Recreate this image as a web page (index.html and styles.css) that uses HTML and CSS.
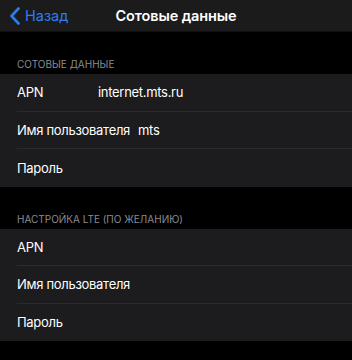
FILE: index.html
```html
<!DOCTYPE html>
<html lang="ru">
<head>
  <meta charset="UTF-8">
  <meta name="viewport" content="width=device-width, initial-scale=1.0">
  <title>Сотовые данные</title>
  <link rel="stylesheet" href="styles.css">
</head>
<body>
  <header class="nav-bar">
    <a class="back-link" href="#">
      <svg class="back-chevron" width="12" height="18" viewBox="0 0 12 18">
        <path d="M9.5 1.5 L2.5 9 L9.5 16.5" fill="none" stroke="currentColor" stroke-width="2.6" stroke-linecap="round" stroke-linejoin="round"/>
      </svg>
      <span>Назад</span>
    </a>
    <h1 class="nav-title">Сотовые данные</h1>
  </header>

  <section class="group">
    <h2 class="group-header">Сотовые данные</h2>
    <ul class="group-list">
      <li class="row"><span class="row-label">APN</span><span class="row-value">internet.mts.ru</span></li>
      <li class="row"><span class="row-label">Имя пользователя</span><span class="row-value row-value-tight">mts</span></li>
      <li class="row"><span class="row-label">Пароль</span></li>
    </ul>
  </section>

  <section class="group">
    <h2 class="group-header">Настройка LTE (по желанию)</h2>
    <ul class="group-list">
      <li class="row"><span class="row-label">APN</span></li>
      <li class="row"><span class="row-label">Имя пользователя</span></li>
      <li class="row"><span class="row-label">Пароль</span></li>
    </ul>
  </section>
</body>
</html>
```

FILE: styles.css
```css
/* Global Styles */
body {
    margin: 0;
    padding: 0;
    background-color: #000000;
    color: #ffffff;
    font-family: Inter, "Liberation Sans", sans-serif;
    -webkit-font-smoothing: antialiased;
}

/* Navigation bar */
.nav-bar {
    position: relative;
    display: flex;
    align-items: center;
    justify-content: center;
    height: 31px;
    background-color: #1b1b1c;
    border-bottom: 1px solid #101010;
}

.back-link {
    position: absolute;
    left: 9px;
    top: 0;
    bottom: 0;
    display: flex;
    align-items: center;
    gap: 4px;
    color: #2f7cf0;
    text-decoration: none;
    font-size: 14.5px;
}

.back-chevron {
    display: block;
}

.nav-title {
    margin: 0;
    font-size: 14.5px;
    font-weight: 600;
    letter-spacing: -0.1px;
}

/* Grouped list */
.group-header {
    margin: 0;
    padding: 26px 17px 4px;
    font-size: 10px;
    line-height: 12px;
    font-weight: 400;
    text-transform: uppercase;
    color: #8b8b90;
}

.group-list {
    list-style: none;
    margin: 0;
    padding: 0;
    background-color: #1c1c1e;
}

.row {
    box-sizing: border-box;
    display: flex;
    align-items: center;
    height: 37.5px;
    margin-left: 17px;
    font-size: 13px;
    letter-spacing: -0.3px;
    border-bottom: 1px solid #2b2b2d;
}

.row:last-child {
    border-bottom: none;
}

.row-label {
    min-width: 81px;
}

.row-value-tight {
    margin-left: 8px;
}
```
